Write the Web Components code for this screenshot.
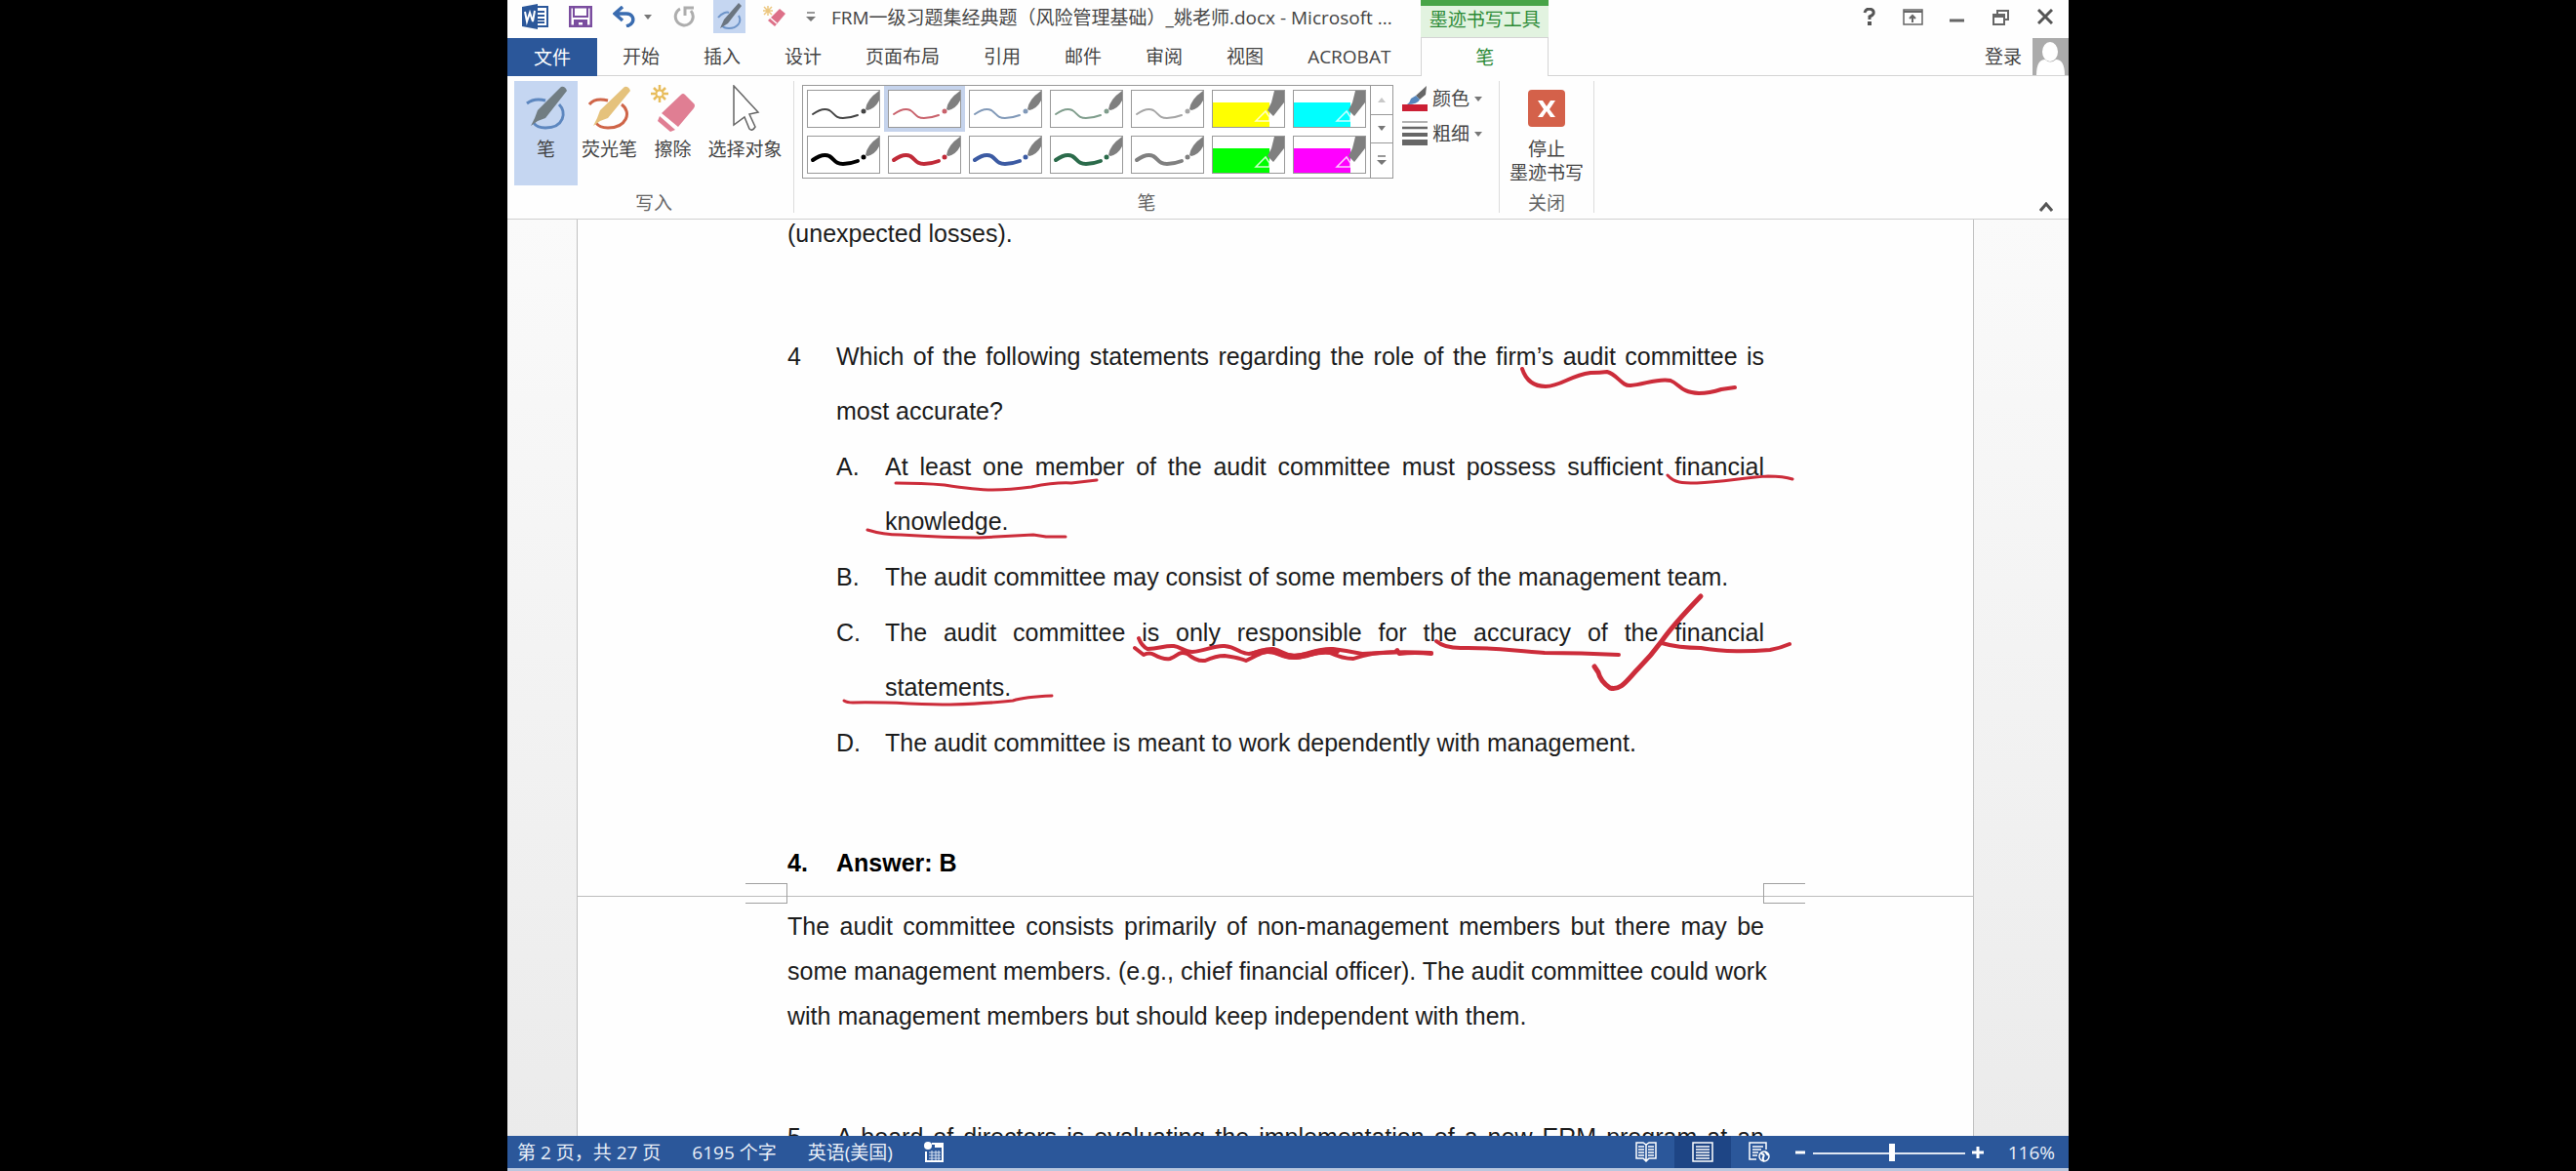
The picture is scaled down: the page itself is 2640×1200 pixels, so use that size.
<!DOCTYPE html>
<html lang="zh-CN">
<head>
<meta charset="utf-8">
<title>Word</title>
<style>
body {
    margin: 0;
    background: #000;
    font-family: "Open Sans", "Noto Sans CJK SC", sans-serif;
    font-size: 19px;
    line-height: 24px;
    color: #444;
}
</style>
</head>
<body>
<word-window></word-window>

<script>
const icons = {
    word: `<svg width="27" height="26" viewBox="0 0 27 26"><rect x="12" y="3" width="14" height="20" fill="#fff" stroke="#2b579a" stroke-width="2"/><path d="M16 8h7M16 12h7M16 16h7M16 19h7" stroke="#2b579a" stroke-width="2"/><path d="M0 3L16 0V26L0 23z" fill="#2b579a"/><path d="M3 8l2 10 3-9 3 9 2-11" fill="none" stroke="#fff" stroke-width="2"/></svg>`,
    save: `<svg width="24" height="22" viewBox="0 0 24 22"><path d="M1 1H23V21H1z" fill="#fff" stroke="#7a4d9f" stroke-width="3"/><path d="M5 1V11H19V1" fill="none" stroke="#7a4d9f" stroke-width="2"/><path d="M5 14H19V21H14V17H10V21H5z" fill="#7a4d9f"/></svg>`,
    undo: `<svg width="24" height="22" viewBox="0 0 24 22"><path d="M10 1L2 8L10 15M3 8H14C20 8 22 13 20 17C19 19 17 20 14 21" fill="none" stroke="#3a6cb0" stroke-width="3.5"/></svg>`,
    redo: `<svg width="23" height="22" viewBox="0 0 23 22"><path d="M7 3A9 9 0 1 0 18 5" fill="none" stroke="#adadad" stroke-width="3"/><path d="M12 10V2H21" fill="none" stroke="#adadad" stroke-width="3"/></svg>`,
    penSmall: `<svg width="26" height="28" viewBox="0 0 26 28"><path d="M1 15C5 10 10 9 12 10M22 13C26 20 20 26 12 26C9 26 6 25 5 23" fill="none" stroke="#6e94c8" stroke-width="2"/><path d="M22 0L25 3L11 21L3 26L7 17z" fill="#6b7580"/></svg>`,
    eraserSmall: `<svg width="24" height="22" viewBox="0 0 24 22"><path d="M5 0V10M0 5H10M1 1L9 9M9 1L1 9" stroke="#ecc780" stroke-width="1.5"/><path d="M17 3L23 8L12 21L5 15z" fill="#dd7088"/><path d="M7 12L14 18" stroke="#fff" stroke-width="1.5"/></svg>`,
    caret: `<svg width="8" height="5" viewBox="0 0 8 5"><path d="M0 0H8L4 5z" fill="#777"/></svg>`,
    customize: `<svg width="10" height="11" viewBox="0 0 10 11"><path d="M1 1H9" stroke="#777" stroke-width="1.5"/><path d="M0 5H10L5 10z" fill="#777"/></svg>`,
    pen: `<svg width="42" height="46" viewBox="0 0 42 46"><path d="M1 18C6 14 13 13 20 15M34 19C42 27 39 43 20 43C15 43 10 41 8 38" fill="none" stroke="#5d87bf" stroke-width="3"/><path d="M36 1Q40 0 42 5L20 33L12 36L5 41L9 33L12 25z" fill="#717d82"/></svg>`,
    highlighter: `<svg width="44" height="46" viewBox="0 0 44 46"><path d="M1 19C5 14 12 13 20 15M34 19C45 27 39 43 20 43C15 43 10 41 8 38" fill="none" stroke="#cf6548" stroke-width="3"/><path d="M37 1Q41 0 43 5L20 33L12 36L5 41L9 33L12 25z" fill="#e5c27c"/></svg>`,
    eraser: `<svg width="46" height="48" viewBox="0 0 46 48"><path d="M9 0V18M0 9H18M3 3L15 15M15 3L3 15" stroke="#e8bd5d" stroke-width="2.5"/><circle cx="9" cy="9" r="3.5" fill="#fff" stroke="#e8bd5d" stroke-width="2"/><path d="M31 10Q33 8 35 10L44 19Q46 21 44 24L28 43L11 29z" fill="#e07e93"/><path d="M9 32L25 46L20 48L7 37z" fill="#e07e93"/></svg>`,
    arrow: `<svg width="30" height="48" viewBox="0 0 30 48"><path d="M3 1L28 28L19 30L25 43Q22 48 19 45L14 33L3 41z" fill="#fff" stroke="#666" stroke-width="1.5"/></svg>`,
    color: `<svg width="26" height="26" viewBox="0 0 26 26"><path d="M25 0L24 9L18 14L14 10z" fill="#666"/><path d="M14 10L18 14Q16 19 5 19Q8 17 9 13z" fill="#5687bd"/><rect y="19" width="26" height="7" fill="#cb1f34"/></svg>`,
    weight: `<svg width="26" height="26" viewBox="0 0 26 26"><path d="M0 1H26" stroke="#666" stroke-width="1"/><path d="M0 7H26" stroke="#666" stroke-width="2.5"/><path d="M0 14H26" stroke="#666" stroke-width="4"/><path d="M0 22H26" stroke="#666" stroke-width="6"/></svg>`,
    stop: `<svg width="38" height="38" viewBox="0 0 38 38"><rect width="38" height="38" rx="4" fill="#d4614a"/><path d="M10 11H15L19 17L23 11H28L22 20L28 28H23L19 22L15 28H10L16 20z" fill="#fff"/></svg>`,
    help: `<svg width="14" height="18" viewBox="0 0 14 18"><path d="M2 5Q3 1 7 1Q12 2 11 6Q10 8 7 9V12" fill="none" stroke="#555" stroke-width="3"/><rect x="5" y="14" width="4" height="4" fill="#555"/></svg>`,
    ribbonMode: `<svg width="21" height="17" viewBox="0 0 21 17"><path d="M1 1H20V16H1z" fill="none" stroke="#666" stroke-width="1.5"/><path d="M1 3H20" stroke="#666" stroke-width="2"/><path d="M10 14V7M7 10L10 7L13 10" fill="none" stroke="#666" stroke-width="2"/></svg>`,
    minimize: `<svg width="15" height="17" viewBox="0 0 15 17"><path d="M0 12H15" stroke="#666" stroke-width="3"/></svg>`,
    restore: `<svg width="17" height="17" viewBox="0 0 17 17"><path d="M5 5V2H16V11H12" fill="none" stroke="#666" stroke-width="2"/><path d="M1 6H12V16H1zM1 8H12" fill="none" stroke="#666" stroke-width="2"/></svg>`,
    close: `<svg width="16" height="16" viewBox="0 0 16 16"><path d="M1 1L15 15M15 1L1 15" stroke="#555" stroke-width="3"/></svg>`,
    avatar: `<svg width="37" height="38" viewBox="0 0 37 38"><rect width="37" height="38" fill="#ababab"/><ellipse cx="18" cy="14" rx="8" ry="10" fill="#fff"/><path d="M4 38Q4 22 13 22Q18 27 24 22Q33 22 33 38z" fill="#fff"/></svg>`,
    collapse: `<svg width="14" height="10" viewBox="0 0 14 10"><path d="M1 9L7 2L13 9" fill="none" stroke="#555" stroke-width="3"/></svg>`,
    macro: `<svg width="20" height="21" viewBox="0 0 20 21"><path d="M8 2H19V20H2V10" fill="none" stroke="#fff" stroke-width="2"/><circle cx="4" cy="4" r="4" fill="#fff"/><path d="M11 3H19V6H11z" fill="#fff"/><path d="M5 11H17M5 14H17M5 17H17M8 9V19M12 9V19M15 9V19" stroke="#dbe5f3" stroke-width="1"/></svg>`,
    read: `<svg width="22" height="21" viewBox="0 0 22 21"><path d="M1 1H8L11 3L14 1H21V17H14L11 20L8 17H1zM11 3V20" fill="none" stroke="#fff" stroke-width="1.5"/><path d="M3 5H9M3 8H9M3 11H9M3 14H9M13 5H19M13 8H19M13 11H19M13 14H19" stroke="#fff" stroke-width="1.5"/></svg>`,
    print: `<svg width="22" height="21" viewBox="0 0 22 21"><path d="M1 1H21V20H1z" fill="none" stroke="#fff" stroke-width="1.5"/><path d="M4 5H18M4 8H18M4 11H18M4 14H18M4 17H18" stroke="#fff" stroke-width="1.5"/></svg>`,
    web: `<svg width="22" height="21" viewBox="0 0 22 21"><path d="M18 8V1H1V18H8" fill="none" stroke="#fff" stroke-width="1.5"/><path d="M4 5H15M4 8H13M4 11H10M4 14H9" stroke="#fff" stroke-width="1.5"/><circle cx="16" cy="15" r="5" fill="#2b579a" stroke="#fff" stroke-width="1.5"/><path d="M13 12Q17 13 15 16Q14 18 16 20M17 10L20 14" fill="none" stroke="#fff" stroke-width="2"/></svg>`
};

const buttonReset = `
button {
    margin: 0;
    padding: 0;
    border: 0;
    background: transparent;
    font: inherit;
    color: inherit;
    cursor: pointer;
}
svg { display: block; flex: none; }
`;


class iconButton extends HTMLElement {
    constructor() {
        super();
        this.shadow = this.attachShadow({mode: "open"});
    }

    connectedCallback() {
        this.shadow.innerHTML = `
<style>
${buttonReset}
:host { display: flex; }
button { display: flex; flex: 1; align-items: center; justify-content: center; gap: 8px; }
:host([active]) { background: var(--active, #c5d6f1); }
</style>
<button aria-label="${this.getAttribute("label")}">
    ${icons[this.getAttribute("icon")]}
    ${this.hasAttribute("menu") ? icons.caret : ""}
</button>`;
    }
}
customElements.define("icon-button", iconButton);


class ribbonButton extends HTMLElement {
    constructor() {
        super();
        this.shadow = this.attachShadow({mode: "open"});
    }

    connectedCallback() {
        this.shadow.innerHTML = `
<style>
${buttonReset}
:host { display: flex; }
:host([active]) { background: #c5d6f1; }
button {
    display: flex;
    flex: 1;
    flex-direction: column;
    align-items: center;
    padding-top: 4px;
    white-space: nowrap;
}
.icon { display: flex; align-items: center; height: 48px; margin-bottom: 6px; }
</style>
<button>
    <span class="icon">${icons[this.getAttribute("icon")]}</span>
    <slot></slot>
</button>`;
    }
}
customElements.define("ribbon-button", ribbonButton);


class ribbonGroup extends HTMLElement {
    constructor() {
        super();
        this.shadow = this.attachShadow({mode: "open"});
    }

    connectedCallback() {
        this.shadow.innerHTML = `
<style>
:host {
    display: flex;
    flex-direction: column;
    justify-content: space-between;
    box-sizing: border-box;
    height: 135px;
    border-right: 1px solid #dcdcdc;
}
.body { display: flex; }
.name { text-align: center; line-height: 20px; color: #666; }
</style>
<div class="body"><slot></slot></div>
<div class="name">${this.getAttribute("name")}</div>`;
    }
}
customElements.define("ribbon-group", ribbonGroup);


// one cell of the pen gallery, either a pen stroke or a highlighter block
class penSwatch extends HTMLElement {
    constructor() {
        super();
        this.shadow = this.attachShadow({mode: "open"});
    }

    drawing() {
        let color = this.getAttribute("color");
        if (this.hasAttribute("marker")) {
            return `<path d="M0 12H58V37H0z" fill="${color}"/>
                <path d="M63 0H73V12L62 26L56 20L60 12z" fill="#7f7f7f"/>
                <path d="M44 31L54 21L58 27V31z" fill="${color}" stroke="#fff" stroke-width="1.5" stroke-opacity=".8"/>`;
        }
        return `<path d="M5 24C12 19 18 18 22 20C28 24 28 28 36 28Q43 28 51 25" fill="none" stroke="${color}" stroke-width="${this.getAttribute("size")}" stroke-linecap="round"/>
            <circle cx="57" cy="21" r="2.5" fill="${color}"/>
            <path d="M59 19Q60 9 73 0V10Q69 18 61 20z" fill="#7f7f7f"/>`;
    }

    connectedCallback() {
        this.shadow.innerHTML = `
<style>
${buttonReset}
:host { display: flex; padding: 4px; }
:host([active]) { background: #c5d3ec; }
button { border: 1px solid #999; background: #fff; }
</style>
<button aria-label="${this.getAttribute("color")}">
    <svg width="73" height="37" viewBox="0 0 73 37">${this.drawing()}</svg>
</button>`;
    }
}
customElements.define("pen-swatch", penSwatch);


class penGallery extends HTMLElement {
    constructor() {
        super();
        this.shadow = this.attachShadow({mode: "open"});
    }

    connectedCallback() {
        let thin = ["#444", "#c9626c", "#8199b8", "#7f9d8c", "#a5a5a5"];
        let thick = ["#000", "#c02a38", "#3c5ba3", "#2b6b4b", "#808080"];
        let pens = (colors, size) => colors.map((c, i) =>
            `<pen-swatch color="${c}" size="${size}" ${size === 2 && i === 1 ? "active" : ""}></pen-swatch>`).join("");
        let markers = colors => colors.map(c => `<pen-swatch color="${c}" marker></pen-swatch>`).join("");

        this.shadow.innerHTML = `
<style>
${buttonReset}
:host { display: flex; border: 1px solid #999; background: #fff; }
.grid { display: grid; grid-template-columns: repeat(7, 83px); }
.scroll { display: grid; width: 22px; border-left: 1px solid #999; }
.scroll button { display: flex; align-items: center; justify-content: center; }
.scroll button + button { border-top: 1px solid #999; }
.off { opacity: .4; }
.up { transform: rotate(180deg); }
</style>
<div class="grid">
    ${pens(thin, 2)}${markers(["#ffff00", "#00ffff"])}
    ${pens(thick, 4)}${markers(["#00ff00", "#ff00ff"])}
</div>
<div class="scroll">
    <button class="off" aria-label="up"><span class="up">${icons.caret}</span></button>
    <button aria-label="down">${icons.caret}</button>
    <button aria-label="more">${icons.customize}</button>
</div>`;
    }
}
customElements.define("pen-gallery", penGallery);


class menuButton extends HTMLElement {
    constructor() {
        super();
        this.shadow = this.attachShadow({mode: "open"});
    }

    connectedCallback() {
        this.shadow.innerHTML = `
<style>
${buttonReset}
:host { display: block; }
button { display: flex; align-items: center; height: 36px; gap: 5px; }
</style>
<button>${icons[this.getAttribute("icon")]}<slot></slot>${icons.caret}</button>`;
    }
}
customElements.define("menu-button", menuButton);


class wordHeader extends HTMLElement {
    constructor() {
        super();
        this.shadow = this.attachShadow({mode: "open"});
    }

    connectedCallback() {
        let tabs = ["开始", "插入", "设计", "页面布局", "引用", "邮件", "审阅", "视图", "ACROBAT"];

        this.shadow.innerHTML = `
<style>
${buttonReset}
:host { display: flex; height: 78px; background: #fefefe; }
.left { display: flex; flex-direction: column; }
.quick { display: flex; align-items: flex-start; height: 39px; padding-left: 12px; }
.quick icon-button { width: 33px; height: 34px; margin-right: 13px; }
.quick .wide { width: 48px; }
.quick .small { width: 16px; }
.title { line-height: 36px; white-space: nowrap; }
nav { display: flex; gap: 45px; height: 38px; padding-right: 31px; border-bottom: 1px solid #d4d4d4; }
nav button { white-space: nowrap; line-height: 36px; }
nav .file { width: 92px; height: 39px; margin-right: -19px; background: #2b579a; color: #fff; }
.tools { display: flex; flex-direction: column; width: 131px; text-align: center; color: #2c8a36; }
.tools span { height: 32px; border-top: 6px solid #47a447; background: #e2f3e0; line-height: 28px; }
.tools button { height: 40px; line-height: 36px; border: 1px solid #d4d4d4; border-bottom: 0; }
.right { display: flex; flex: 1; flex-direction: column; align-items: flex-end; border-bottom: 1px solid #d4d4d4; }
.controls { display: flex; height: 39px; padding-right: 2px; }
.controls icon-button { width: 45px; height: 34px; }
.login { display: flex; gap: 11px; height: 38px; line-height: 34px; }
</style>
<div class="left">
    <div class="quick">
        <icon-button icon="word" label="Word"></icon-button>
        <icon-button icon="save" label="保存"></icon-button>
        <icon-button class="wide" icon="undo" label="撤消" menu></icon-button>
        <icon-button icon="redo" label="重复"></icon-button>
        <icon-button icon="penSmall" label="笔" active></icon-button>
        <icon-button icon="eraserSmall" label="擦除"></icon-button>
        <icon-button class="small" icon="customize" label="自定义"></icon-button>
        <div class="title">FRM一级习题集经典题（风险管理基础）_姚老师.docx - Microsoft ...</div>
    </div>
    <nav>
        <button class="file">文件</button>
        ${tabs.map(t => `<button>${t}</button>`).join("")}
    </nav>
</div>
<div class="tools"><span>墨迹书写工具</span><button>笔</button></div>
<div class="right">
    <div class="controls">
        <icon-button icon="help" label="帮助"></icon-button>
        <icon-button icon="ribbonMode" label="功能区"></icon-button>
        <icon-button icon="minimize" label="最小化"></icon-button>
        <icon-button icon="restore" label="还原"></icon-button>
        <icon-button icon="close" label="关闭"></icon-button>
    </div>
    <div class="login"><button>登录</button>${icons.avatar}</div>
</div>`;
    }
}
customElements.define("word-header", wordHeader);


class wordRibbon extends HTMLElement {
    constructor() {
        super();
        this.shadow = this.attachShadow({mode: "open"});
    }

    connectedCallback() {
        this.shadow.innerHTML = `
<style>
:host {
    display: flex;
    box-sizing: border-box;
    height: 147px;
    padding: 5px 16px 0 7px;
    border-bottom: 1px solid #d0d0d0;
    background: #fefefe;
}
ribbon-button { height: 107px; }
.write { width: 287px; }
.write ribbon-button { width: 65px; }
.write ribbon-button:last-child { width: 83px; }
.pens { width: 723px; }
pen-gallery { margin: 4px 9px 0 8px; }
.stop { width: 97px; }
.stop ribbon-button { flex: 1; }
icon-button { align-self: flex-end; margin: 0 0 7px auto; }
</style>
<ribbon-group class="write" name="写入">
    <ribbon-button icon="pen" active>笔</ribbon-button>
    <ribbon-button icon="highlighter">荧光笔</ribbon-button>
    <ribbon-button icon="eraser">擦除</ribbon-button>
    <ribbon-button icon="arrow">选择对象</ribbon-button>
</ribbon-group>
<ribbon-group class="pens" name="笔">
    <pen-gallery></pen-gallery>
    <div>
        <menu-button icon="color">颜色</menu-button>
        <menu-button icon="weight">粗细</menu-button>
    </div>
</ribbon-group>
<ribbon-group class="stop" name="关闭">
    <ribbon-button icon="stop">停止<br>墨迹书写</ribbon-button>
</ribbon-group>
<icon-button icon="collapse" label="折叠功能区"></icon-button>`;
    }
}
customElements.define("word-ribbon", wordRibbon);


// number on the left, justified text on the right
class numberedText extends HTMLElement {
    constructor() {
        super();
        this.shadow = this.attachShadow({mode: "open"});
    }

    connectedCallback() {
        this.shadow.innerHTML = `
<style>
:host { display: grid; grid-template-columns: 50px 1fr; text-align: justify; }
</style>
<span>${this.getAttribute("number")}</span>
<div><slot></slot></div>`;
    }
}
customElements.define("numbered-text", numberedText);


class pageBreak extends HTMLElement {
    constructor() {
        super();
        this.shadow = this.attachShadow({mode: "open"});
    }

    connectedCallback() {
        this.shadow.innerHTML = `
<style>
:host {
    display: flex;
    justify-content: space-between;
    height: 21px;
    padding: 0 172px;
    background: linear-gradient(#bdbdbd, #bdbdbd) 0 13px / 100% 1px no-repeat;
}
span { box-sizing: border-box; width: 43px; border: 1px solid #a0a0a0; }
.start { border-left: 0; }
.end { border-right: 0; }
</style>
<span class="start"></span><span class="end"></span>`;
    }
}
customElements.define("page-break", pageBreak);


class inkLayer extends HTMLElement {
    constructor() {
        super();
        this.shadow = this.attachShadow({mode: "open"});
    }

    connectedCallback() {
        this.shadow.innerHTML = `
<style>
:host { position: absolute; top: 0; left: 0; pointer-events: none; }
svg { display: block; }
path { fill: none; stroke: #cc2c3a; stroke-linecap: round; stroke-linejoin: round; }
</style>
<svg width="1600" height="939" viewBox="520 225 1600 939" stroke-width="3">
    <path d="M1560 378Q1566 396 1584 396C1600 396 1608 385 1630 382Q1640 382 1647 381C1658 384 1662 396 1671 395C1685 394 1700 387 1712 390C1722 394 1722 402 1741 403Q1752 403 1764 399L1778 397" stroke-width="4"/>
    <path d="M1709 487C1716 495 1724 495 1739 495C1765 494 1790 489 1812 488Q1828 488 1837 491"/>
    <path d="M918 495Q945 495 968 497Q1000 502 1017 502Q1035 502 1057 499Q1082 494 1098 495L1124 492"/>
    <path d="M889 543Q905 548 923 548Q970 551 1003 551Q1040 549 1059 548L1072 550L1092 550"/>
    <path d="M865 718Q868 720 874 720C910 719 940 722 974 722C1005 721 1030 719 1038 718Q1050 714 1078 713"/>
    <path d="M1167 654Q1170 662 1176 665C1188 665 1194 661 1203 662C1210 663 1214 668 1222 668C1236 667 1244 661 1255 662C1268 663 1270 670 1280 670C1290 669 1296 664 1305 665C1315 667 1318 673 1328 672C1343 670 1350 664 1366 665Q1382 667 1396 670Q1415 669 1430 668L1432 666L1434 670Q1450 668 1467 670" stroke-width="4"/>
    <path d="M1163 664L1172 671Q1178 668 1183 671Q1192 676 1199 675C1208 672 1207 667 1217 670Q1226 678 1235 677Q1246 672 1255 672Q1270 674 1277 677C1290 671 1294 667 1304 668C1314 670 1318 675 1328 674C1342 672 1350 667 1363 669Q1376 675 1387 675Q1395 672 1406 670Q1430 667 1467 669" stroke-width="4"/>
    <path d="M1285 670Q1300 664 1312 670Q1322 675 1340 671Q1355 666 1370 667" stroke-width="6"/>
    <path d="M1472 657Q1480 664 1497 664C1530 663 1550 667 1583 669Q1620 669 1659 671" stroke-width="4"/>
    <path d="M1634 683L1638 689Q1640 698 1650 705C1662 708 1668 696 1680 684Q1692 672 1703 657Q1715 640 1743 611" stroke-width="5"/>
    <path d="M1703 659Q1720 664 1743 664C1765 668 1790 668 1814 666Q1825 664 1834 660" stroke-width="4"/>
</svg>`;
    }
}
customElements.define("ink-layer", inkLayer);


class wordDocument extends HTMLElement {
    constructor() {
        super();
        this.shadow = this.attachShadow({mode: "open"});
    }

    connectedCallback() {
        this.shadow.innerHTML = `
<style>
:host {
    display: block;
    position: relative;
    overflow: hidden;
    padding: 0 97px 0 71px;
    background: linear-gradient(#fafafa, #f1f1f1 60%, #ebebeb);
    font-family: "Liberation Sans", Arial, sans-serif;
    font-size: 25px;
    line-height: 28px;
    color: #1c1c1c;
}
.page { border: solid #c0c0c0; border-width: 0 1px; background: #fefefe; }
.text { padding: 0 214px 0 215px; }
p { margin: 0; text-align: justify; }
.question { display: grid; gap: 1px; margin: 84px 0 81px; line-height: 56px; }
.options { display: grid; gap: 1px; padding-left: 50px; }
.answer { margin-bottom: 7px; font-weight: bold; color: #000; }
.explain { margin-bottom: 87px; line-height: 46px; }
.tight { display: block; white-space: nowrap; }
.full, .next { text-align-last: justify; }
.full { display: block; }
</style>
<div class="page">
    <div class="text">
        <p>(unexpected losses).</p>
        <div class="question">
            <numbered-text number="4">Which of the following statements regarding the role of the firm’s audit committee is most accurate?</numbered-text>
            <div class="options">
                <numbered-text number="A.">At least one member of the audit committee must possess sufficient financial knowledge.</numbered-text>
                <numbered-text number="B.">The audit committee may consist of some members of the management team.</numbered-text>
                <numbered-text number="C.">The audit committee is only responsible for the accuracy of the financial statements.</numbered-text>
                <numbered-text number="D.">The audit committee is meant to work dependently with management.</numbered-text>
            </div>
        </div>
        <numbered-text class="answer" number="4.">Answer: B</numbered-text>
    </div>
    <page-break></page-break>
    <div class="text">
        <p class="explain">
            <span class="full">The audit committee consists primarily of non-management members but there may be</span>
            <span class="tight">some management members. (e.g., chief financial officer). The audit committee could work</span>
            with management members but should keep independent with them.
        </p>
        <numbered-text class="next" number="5.">A board of directors is evaluating the implementation of a new ERM program at an</numbered-text>
    </div>
</div>
<ink-layer></ink-layer>`;
    }
}
customElements.define("word-document", wordDocument);


class wordStatus extends HTMLElement {
    constructor() {
        super();
        this.shadow = this.attachShadow({mode: "open"});
    }

    connectedCallback() {
        this.shadow.innerHTML = `
<style>
${buttonReset}
:host {
    display: flex;
    align-items: center;
    height: 33px;
    padding: 0 14px 0 10px;
    border-bottom: 3px solid #b9c7de;
    background: #2b579a;
    color: #e9eff8;
    --active: #1e4585;
}
.info { display: flex; flex: 1; align-items: center; gap: 32px; }
.views { display: flex; align-self: stretch; }
.views icon-button { width: 58px; }
.zoom { display: flex; align-items: center; }
input {
    appearance: none;
    width: 156px;
    height: 20px;
    margin: 0 7px;
    background: linear-gradient(#dfe7f3, #dfe7f3) 0 10px / 100% 2px no-repeat;
}
input::-webkit-slider-thumb { appearance: none; width: 6px; height: 18px; background: #fff; }
.percent { width: 73px; text-align: right; }
</style>
<div class="info">
    <span>第 2 页，共 27 页</span>
    <span>6195 个字</span>
    <span>英语(美国)</span>
    <icon-button icon="macro" label="宏"></icon-button>
</div>
<div class="views">
    <icon-button icon="read" label="阅读视图"></icon-button>
    <icon-button icon="print" label="页面视图" active></icon-button>
    <icon-button icon="web" label="Web 版式视图"></icon-button>
</div>
<div class="zoom">
    <button aria-label="缩小"><svg width="19" height="14" viewBox="0 0 19 14"><path d="M8 7H18" stroke="#fff" stroke-width="3"/></svg></button>
    <input type="range" min="0" max="100" value="52" aria-label="显示比例">
    <button aria-label="放大"><svg width="12" height="14" viewBox="0 0 12 14"><path d="M0 7H12M6 1V13" stroke="#fff" stroke-width="3"/></svg></button>
    <span class="percent">116%</span>
</div>`;
    }
}
customElements.define("word-status", wordStatus);


class wordWindow extends HTMLElement {
    constructor() {
        super();
        this.shadow = this.attachShadow({mode: "open"});
    }

    connectedCallback() {
        this.shadow.innerHTML = `
<style>
:host {
    display: flex;
    flex-direction: column;
    max-width: 1600px;
    height: 100vh;
    margin: 0 auto;
    overflow: hidden;
}
word-document { flex: 1; min-height: 0; }
word-header, word-ribbon, word-status { flex: none; }
</style>
<word-header></word-header>
<word-ribbon></word-ribbon>
<word-document></word-document>
<word-status></word-status>`;
    }
}
customElements.define("word-window", wordWindow);
</script>
</body>
</html>
